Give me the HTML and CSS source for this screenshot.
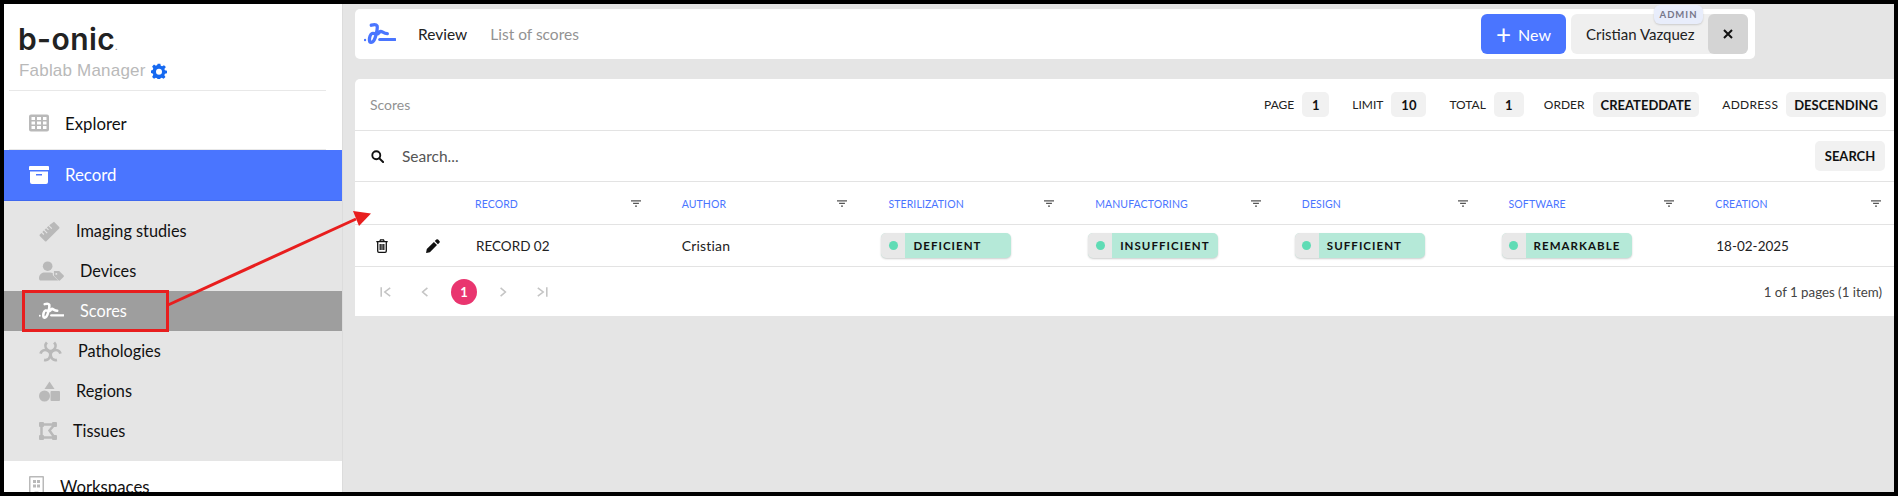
FILE: index.html
```html
<!DOCTYPE html>
<html lang="en">
<head>
<meta charset="utf-8">
<title>Scores</title>
<link rel="stylesheet" href="styles.css">
</head>
<body>
<svg width="0" height="0" class="defs">
  <defs>
    <symbol id="sig" viewBox="0 0 32 22">
      <circle cx="1" cy="17" r="1.200" fill="currentColor"/>
      <path d="M7.300 2.200C9.500 1.600 12 1 13 2.800C14 5 11.500 15.500 9.500 18C8 20 5.800 20 5.500 17.500C5.200 14.500 6.500 11 8 10.500C10 10 12.500 11.500 14 10.700C15 10 15.500 8.500 16.700 8.300C18.500 8.300 19.500 10.500 23.300 10.600" fill="none" stroke="currentColor" stroke-width="3.300" stroke-linecap="round" stroke-linejoin="round"/>
      <path d="M15.700 16.500H31" fill="none" stroke="currentColor" stroke-width="3" stroke-linecap="round"/>
    </symbol>
    <symbol id="filter" viewBox="0 0 12 8">
      <path d="M0 0H12V1.500H0ZM2.500 3.200H9.500V4.700H2.500ZM4.800 6.400H7.200V7.900H4.800Z" fill="currentColor"/>
    </symbol>
    <path id="lobe" d="M7.900 2.500A5 5 0 1 0 15.100 2.500" fill="none" stroke="currentColor" stroke-width="2.700"/>
  </defs>
</svg>
<div class="frame">
  <aside class="sidebar">
    <div class="brand">
      <div class="logo">b-onic<span class="logo-dot">.</span></div>
      <div class="app-name">
        <span>Fablab Manager</span>
        <svg class="gear" viewBox="0 0 24 24"><path fill="currentColor" fill-rule="evenodd" d="M10 1h4l.7 3.100 2 .9 2.800-1.700 2.800 2.800L20 8.900l.9 2.100 3.100.7v3.800l-3.100.7-.9 2 1.700 2.800-2.800 2.800-2.800-1.700-2 .9-.7 3H10l-.7-3-2-.9-2.800 1.700-2.800-2.800L3.400 17.700l-.9-2-2.500-.7v-3.800l2.500-.7.900-2.100L1.700 5.100l2.800-2.800 2.800 1.700 2-.9zM12 8.500a4.500 4.500 0 1 0 0 9 4.500 4.500 0 0 0 0-9z"/></svg>
      </div>
    </div>
    <nav class="nav">
      <a class="nav-top nav-first">
        <svg class="icon w20" viewBox="0 0 20 17"><path fill="currentColor" fill-rule="evenodd" d="M2 0h16a2 2 0 0 1 2 2v13a2 2 0 0 1-2 2H2a2 2 0 0 1-2-2V2a2 2 0 0 1 2-2zM2.500 2.500v3h3.500v-3zm5.500 0v3h4v-3zm6 0v3h3.500v-3zM2.500 7v3h3.500V7zM8 7v3h4V7zm6 0v3h3.500V7zM2.500 11.500v3h3.500v-3zm5.500 0v3h4v-3zm6 0v3h3.500v-3z"/></svg>
        <span>Explorer</span>
      </a>
      <a class="nav-top nav-active">
        <svg class="icon w20" viewBox="0 0 20 18"><path fill="currentColor" fill-rule="evenodd" d="M1 0h18a1 1 0 0 1 1 1v3H0V1a1 1 0 0 1 1-1zM1 5.500h18V16a2 2 0 0 1-2 2H3a2 2 0 0 1-2-2zM7 8v1.500h6V8z"/></svg>
        <span>Record</span>
      </a>
      <div class="submenu">
        <a class="nav-sub">
          <svg class="icon w21" viewBox="0 0 21 21"><path fill="currentColor" d="M15 .8l5.200 5.200a1 1 0 0 1 0 1.400L7.400 20.200a1 1 0 0 1-1.400 0L.8 15a1 1 0 0 1 0-1.400l1.700-1.700 2 2 .8-.8-2-2 1.500-1.500 3 3 .8-.8-3-3 1.500-1.500 2 2 .8-.8-2-2 1.500-1.500 3 3 .8-.8-3-3z"/></svg>
          <span>Imaging studies</span>
        </a>
        <a class="nav-sub">
          <svg class="icon w26" viewBox="0 0 26 20"><circle cx="9" cy="5" r="5" fill="currentColor"/><path fill="currentColor" d="M0 17.500C0 13.500 3 11.500 6 11.500h5.500c1 0 2 .2 2.800.6v1.400c0 .6.200 1.100.6 1.500L20 20H1.800C.8 20 0 19 0 17.500z"/><path fill="currentColor" fill-rule="evenodd" d="M15.500 10h5c.4 0 .7.100 1 .4l4 4a1.300 1.300 0 0 1 0 1.800l-3.500 3.400a1.300 1.300 0 0 1-1.800 0l-4.200-4.200c-.3-.3-.5-.6-.5-1zM18 12a1 1 0 1 0 0 2 1 1 0 0 0 0-2z"/></svg>
          <span>Devices</span>
        </a>
        <a class="nav-sub nav-sub-active">
          <svg class="icon w26 sig-icon"><use href="#sig"/></svg>
          <span>Scores</span>
        </a>
        <a class="nav-sub">
          <svg class="icon w23" viewBox="0 0 23 22"><use href="#lobe"/><use href="#lobe" transform="rotate(120 11.500 12)"/><use href="#lobe" transform="rotate(240 11.500 12)"/><circle cx="11.500" cy="12" r="2" fill="currentColor"/></svg>
          <span>Pathologies</span>
        </a>
        <a class="nav-sub">
          <svg class="icon w21" viewBox="0 0 21 20"><path fill="currentColor" d="M10.500 0l5 7.500h-10z"/><circle cx="5.500" cy="14.500" r="5.500" fill="currentColor"/><rect x="11.500" y="9.500" width="9.500" height="10" rx="1" fill="currentColor"/></svg>
          <span>Regions</span>
        </a>
        <a class="nav-sub">
          <svg class="icon w18" viewBox="0 0 18 18"><path fill="none" stroke="currentColor" stroke-width="2.500" d="M2.500 2.500H15.500L10.500 8.500L15.500 15.500H2.500Z"/><g fill="currentColor"><rect width="5" height="5" rx="1"/><rect x="13" width="5" height="5" rx="1"/><rect y="13" width="5" height="5" rx="1"/><rect x="13" y="13" width="5" height="5" rx="1"/></g></svg>
          <span>Tissues</span>
        </a>
      </div>
      <a class="nav-top nav-last">
        <svg class="icon w15" viewBox="0 0 15 20"><path fill="currentColor" fill-rule="evenodd" d="M1 0h13a1 1 0 0 1 1 1v19H0V1a1 1 0 0 1 1-1zM1.500 1.500v17h4v-3h4v3h4v-17zM4 4h3v3H4zm4 0h3v3H8zM4 8.500h3v3H4zm4 0h3v3H8z"/></svg>
        <span>Workspaces</span>
      </a>
    </nav>
  </aside>
  <main class="main">
    <header class="topbar">
      <svg class="top-sig"><use href="#sig"/></svg>
      <span class="crumb">Review</span>
      <span class="crumb-muted">List of scores</span>
      <div class="top-actions">
        <button class="btn-new"><span class="plus">+</span> New</button>
        <div class="user">
          <span class="user-name">Cristian Vazquez</span>
          <span class="user-close"><svg class="close-x" viewBox="0 0 10 10"><path d="M1 1l8 8M9 1l-8 8" stroke="currentColor" stroke-width="2"/></svg></span>
          <span class="role">ADMIN</span>
        </div>
      </div>
    </header>
    <section class="card">
      <div class="meta">
        <span class="meta-title">Scores</span>
        <div class="meta-items">
          <div class="meta-item">PAGE <b class="chip">1</b></div>
          <div class="meta-item">LIMIT <b class="chip chip-limit">10</b></div>
          <div class="meta-item">TOTAL <b class="chip chip-total">1</b></div>
          <div class="meta-item meta-order">ORDER <b class="chip">CREATEDDATE</b></div>
          <div class="meta-item meta-address">ADDRESS <b class="chip">DESCENDING</b></div>
        </div>
      </div>
      <div class="search">
        <svg class="search-icon" viewBox="0 0 14 14"><circle cx="5.700" cy="5.700" r="4.300" fill="none" stroke="currentColor" stroke-width="2"/><path d="M9 9l4 4" stroke="currentColor" stroke-width="2.200" stroke-linecap="round"/></svg>
        <span class="search-text">Search...</span>
        <button class="search-btn">SEARCH</button>
      </div>
      <div class="table-row table-head">
        <div></div>
        <div class="th">RECORD<svg class="filter"><use href="#filter"/></svg></div>
        <div class="th">AUTHOR<svg class="filter"><use href="#filter"/></svg></div>
        <div class="th">STERILIZATION<svg class="filter"><use href="#filter"/></svg></div>
        <div class="th">MANUFACTORING<svg class="filter"><use href="#filter"/></svg></div>
        <div class="th">DESIGN<svg class="filter"><use href="#filter"/></svg></div>
        <div class="th">SOFTWARE<svg class="filter"><use href="#filter"/></svg></div>
        <div class="th">CREATION<svg class="filter"><use href="#filter"/></svg></div>
      </div>
      <div class="table-row table-body">
        <div class="actions">
          <svg class="act-icon" viewBox="0 0 12 14"><path fill="none" stroke="currentColor" stroke-width="1.300" d="M1.700 3.200V12c0 .8.500 1.300 1.200 1.300h6.200c.7 0 1.200-.5 1.200-1.300V3.200M.3 2.700h11.400M3.800 2.500L4.500.8h3l.7 1.700M4.200 5v6M6 5v6M7.800 5v6"/></svg>
          <svg class="act-icon" viewBox="0 0 14 14"><path fill="currentColor" d="M10.300.6a1.300 1.300 0 0 1 1.800 0l1.300 1.300a1.300 1.300 0 0 1 0 1.800l-1.500 1.500-3.100-3.100zM7.900 3L11 6.100 3.900 13.200.4 13.900a.3.300 0 0 1-.3-.3l.7-3.500z"/></svg>
        </div>
        <div class="td td-caps">RECORD 02</div>
        <div class="td">Cristian</div>
        <div class="td"><span class="badge"><span class="badge-dot"><i></i></span><span class="badge-label">DEFICIENT</span></span></div>
        <div class="td"><span class="badge"><span class="badge-dot"><i></i></span><span class="badge-label">INSUFFICIENT</span></span></div>
        <div class="td"><span class="badge"><span class="badge-dot"><i></i></span><span class="badge-label">SUFFICIENT</span></span></div>
        <div class="td"><span class="badge"><span class="badge-dot"><i></i></span><span class="badge-label">REMARKABLE</span></span></div>
        <div class="td td-caps">18-02-2025</div>
      </div>
      <div class="pager">
        <div class="pager-nav">
          <svg class="pg" viewBox="0 0 10 10"><path d="M1 1v8M8.500 1.500L4 5l4.500 3.500" fill="none" stroke="currentColor" stroke-width="1.300"/></svg>
          <svg class="pg" viewBox="0 0 10 10"><path d="M7 1.500L3 5l4 3.500" fill="none" stroke="currentColor" stroke-width="1.300"/></svg>
          <span class="pg-current">1</span>
          <svg class="pg" viewBox="0 0 10 10"><path d="M3 1.500L7 5l-4 3.500" fill="none" stroke="currentColor" stroke-width="1.300"/></svg>
          <svg class="pg" viewBox="0 0 10 10"><path d="M9 1v8M1.500 1.500L6 5 1.500 8.500" fill="none" stroke="currentColor" stroke-width="1.300"/></svg>
        </div>
        <span class="pager-info">1 of 1 pages (1 item)</span>
      </div>
    </section>
  </main>
  <svg class="annotation" viewBox="0 0 1890 488">
    <rect x="19.500" y="287.500" width="144" height="39" fill="none" stroke="#e81e1e" stroke-width="3"/>
    <path d="M164 301L352 215" stroke="#e81e1e" stroke-width="3" fill="none"/>
    <path d="M367 209.500L349 207L355 222Z" fill="#e81e1e"/>
  </svg>
</div>
</body>
</html>
```

FILE: styles.css
```css
* { box-sizing: border-box; }
html, body { margin: 0; padding: 0; }
body { font-family: "Lato", "Liberation Sans", sans-serif; color: #111; background: #000; }
.defs { position: absolute; }
.frame {
  position: relative;
  width: 1898px;
  height: 496px;
  border: 4px solid #000;
  display: flex;
  overflow: hidden;
  background: #e5e5e5;
}
.sidebar {
  width: 339px;
  flex: none;
  background: #fff;
  border-right: 1px solid #dcdcdc;
  overflow: hidden;
}
.brand {
  margin: 0 16px 0 5px;
  height: 87px;
  padding: 20px 0 0 9px;
  border-bottom: 1px solid #e8e8e8;
}
.logo {
  font-family: "Inter", sans-serif;
  font-weight: 600;
  font-size: 30px;
  line-height: 30px;
  letter-spacing: 0.4px;
  color: #222;
}
.logo-dot { font-size: 8px; letter-spacing: 0; color: #888; }
.app-name {
  display: flex;
  align-items: center;
  gap: 5px;
  margin: -2px 0 0 1px;
  font-family: "Liberation Sans", sans-serif;
  font-size: 17px;
  line-height: 22px;
  letter-spacing: 0.2px;
  color: #b9b9b9;
}
.gear { width: 16px; height: 16px; color: #1669f0; }
.nav { display: block; }
a { display: flex; align-items: center; }
.icon { flex: none; color: #b9b9b9; }
.w15 { width: 15px; height: 20px; }
.w18 { width: 18px; height: 18px; }
.w20 { width: 20px; height: 18px; }
.w21 { width: 21px; height: 21px; }
.w23 { width: 23px; height: 22px; }
.w26 { width: 25px; height: 20px; }
.nav-top {
  height: 59px;
  padding-left: 25px;
  gap: 16px;
  font-size: 16.800px;
  background: #fff;
}
.nav-first {
  margin: 0 16px 0 5px;
  padding: 6px 0 0 20px;
  border-bottom: 1px solid #e8e8e8;
}
.nav-active {
  height: 51px;
  color: #fff;
  background: #4a75ff;
  border-bottom: 1px solid #3f68ef;
}
.nav-active span { margin-top: -1px; }
.nav-active .icon { color: #fff; }
.submenu { background: #e5e5e5; height: 260px; padding-top: 10px; }
.nav-sub {
  height: 40px;
  padding-left: 35px;
  gap: 16px;
  font-size: 16.300px;
}
.nav-sub span { margin-top: -1px; }
.nav-sub-active { background: #9e9e9e; color: #fff; }
.nav-sub-active .icon { color: #fff; }
.sig-icon { height: 22px; }
.nav-last { gap: 16px; height: 50px; }
.main {
  flex: 1;
  min-width: 0;
  padding: 5px 0 0 12px;
}
.topbar {
  width: 1400px;
  height: 50px;
  background: #fff;
  border-radius: 5px;
  display: flex;
  align-items: center;
  padding: 0 7px 0 9px;
  font-size: 15.500px;
}
.top-sig { width: 32px; height: 22px; color: #4a75ff; margin-right: 22px; }
.crumb { color: #222; margin-right: 23px; }
.crumb-muted { color: #929292; }
.top-actions { margin-left: auto; display: flex; gap: 5px; }
.btn-new {
  width: 85px;
  height: 40px;
  border: 0;
  border-radius: 6px;
  background: #4a75ff;
  color: #fff;
  font: 16px "Lato", sans-serif;
  display: flex;
  align-items: center;
  justify-content: center;
  gap: 7px;
}
.plus { font-size: 26px; line-height: 26px; font-weight: 400; }
.user {
  position: relative;
  width: 177px;
  height: 40px;
  background: #efefef;
  border-radius: 6px;
  display: flex;
  align-items: center;
  font-size: 15px;
}
.user-name { flex: 1; padding-left: 15px; color: #222; }
.user-close {
  width: 40px;
  height: 40px;
  background: #d4d4d4;
  border-radius: 6px;
  display: flex;
  align-items: center;
  justify-content: center;
}
.close-x { width: 10px; height: 10px; color: #111; }
.role {
  position: absolute;
  left: 83px;
  top: -9px;
  width: 49px;
  height: 19px;
  background: #e8edfb;
  border-radius: 6px;
  box-shadow: 0 1px 2px rgba(0,0,0,.15);
  color: #77778a;
  font-size: 9.500px;
  font-weight: 700;
  letter-spacing: 1px;
  text-align: center;
  line-height: 19px;
}
.card {
  margin-top: 20px;
  height: 237px;
  background: #fff;
  border-radius: 5px 0 0 0;
}
.meta {
  height: 52px;
  display: flex;
  align-items: center;
  justify-content: space-between;
  padding: 0 8px 0 15px;
  border-bottom: 1px solid #e3e3e3;
}
.meta-title { color: #929292; font-size: 14px; margin-top: -1px; }
.meta-items { display: flex; gap: 23px; }
.meta-item { display: flex; align-items: center; gap: 8px; font-size: 12px; color: #222; }
.meta-order { margin-left: -3px; }
.meta-address { letter-spacing: 0.3px; }
.meta-address .chip { letter-spacing: 0; }
.chip {
  height: 25px;
  padding: 0 8px;
  min-width: 27px;
  background: #f1f1f1;
  border-radius: 5px;
  display: flex;
  align-items: center;
  justify-content: center;
  font-size: 13px;
  color: #111;
}
.chip-total { min-width: 30px; }
.chip-limit { min-width: 35px; }
.search {
  height: 51px;
  display: flex;
  align-items: center;
  padding: 0 9px 0 16px;
  border-bottom: 1px solid #e3e3e3;
}
.search-icon { width: 13px; height: 13px; color: #111; margin-right: 18px; }
.search-text { flex: 1; font-size: 15.500px; color: #555; }
.search-btn {
  width: 70px;
  height: 30px;
  border: 0;
  border-radius: 5px;
  background: #f1f1f1;
  font: 700 13px "Lato", sans-serif;
  color: #111;
}
.table-row { display: grid; grid-template-columns: 92px repeat(7, 1fr); }
.table-head { height: 43px; border-bottom: 1px solid #e3e3e3; align-items: center; }
.th {
  display: flex;
  align-items: center;
  justify-content: space-between;
  padding: 2px 13px 0 28px;
  font-size: 10.500px;
  letter-spacing: 0.1px;
  color: #4a75ff;
}
.filter { width: 10px; height: 7px; color: #555; margin-top: -2px; }
.table-body { height: 42px; border-bottom: 1px solid #e3e3e3; align-items: center; }
.actions { display: flex; gap: 37px; padding-left: 20px; color: #111; }
.act-icon { width: 14px; height: 14px; }
.td { padding-left: 28px; font-size: 14px; color: #222; display: flex; align-items: center; letter-spacing: 0.2px; }
.td-caps { font-size: 13.500px; letter-spacing: 0; padding-left: 29px; }
.badge {
  display: flex;
  width: 130px;
  height: 25px;
  margin-left: -7px;
  border-radius: 5px;
  overflow: hidden;
  background: #b5e9d8;
  box-shadow: 0 1px 2px rgba(0,0,0,.2);
}
.badge-dot {
  width: 24px;
  background: #e8e8e8;
  display: flex;
  align-items: center;
  justify-content: center;
}
.badge-dot i { width: 9px; height: 9px; border-radius: 50%; background: #5fdcb5; }
.badge-label {
  padding-left: 8px;
  font-size: 11.500px;
  font-weight: 700;
  letter-spacing: 1.050px;
  line-height: 25px;
  color: #111;
}
.pager {
  height: 49px;
  display: flex;
  align-items: center;
  justify-content: space-between;
  padding: 0 12px 0 20px;
}
.pager-nav { display: flex; align-items: center; gap: 15px; }
.pg { width: 12px; height: 12px; color: #c4c4c4; margin: 0 7px 0 5px; }
.pg-current {
  width: 26px;
  height: 26px;
  margin: 0 0 0 -2px;
  border-radius: 50%;
  background: #e9356f;
  color: #fff;
  font-size: 13px;
  font-weight: 700;
  display: flex;
  align-items: center;
  justify-content: center;
}
.pager-info { font-size: 13.300px; color: #444; }
.annotation {
  position: absolute;
  left: 0;
  top: 0;
  width: 1890px;
  height: 488px;
  pointer-events: none;
}
```
